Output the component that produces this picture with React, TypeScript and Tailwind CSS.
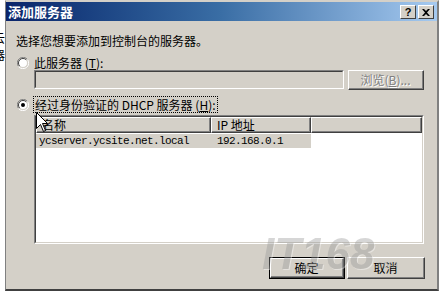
import React from 'react';

const cjk = { fontFamily: '"Noto Sans CJK SC", "Liberation Sans", sans-serif' };
const mono = { fontFamily: '"Liberation Mono", "Noto Sans CJK SC", monospace' };

function Radio({ checked }: { checked?: boolean }) {
  return (
    <svg width="12" height="12" viewBox="0 0 12 12" className="shrink-0">
      <path d="M10.5 2.5 A5.5 5.5 0 0 0 1.5 9.5" fill="none" stroke="#808080" strokeWidth="1" />
      <path d="M1.5 9.5 A5.5 5.5 0 0 0 10.5 2.5" fill="none" stroke="#ffffff" strokeWidth="1" />
      <circle cx="6" cy="6" r="4.5" fill="#ffffff" />
      <path d="M9.2 2.8 A4.5 4.5 0 0 0 2.8 9.2" fill="none" stroke="#404040" strokeWidth="1" />
      <path d="M2.8 9.2 A4.5 4.5 0 0 0 9.2 2.8" fill="none" stroke="#d4d0c8" strokeWidth="1" />
      {checked && <circle cx="6" cy="6" r="2" fill="#000000" />}
    </svg>
  );
}

function Button({ label, def, disabled, w }: { label: React.ReactNode; def?: boolean; disabled?: boolean; w: string }) {
  return (
    <div className={`${w} h-full ${def ? 'border border-black' : ''}`}>
      <div className="h-full border-t border-l border-t-white border-l-white border-r border-b border-r-[#404040] border-b-[#404040]">
        <div className="h-full flex items-center justify-center border-r border-b border-r-[#808080] border-b-[#808080] bg-[#d4d0c8]">
          <span
            className={`text-[12px] leading-[14px] ${disabled ? 'text-[#808080] [text-shadow:1px_1px_0_#ffffff]' : 'text-black'}`}
            style={cjk}
          >
            {label}
          </span>
        </div>
      </div>
    </div>
  );
}

function HeaderCell({ label, w }: { label: string; w: string }) {
  return (
    <div className={`${w} h-full border-t border-l border-t-white border-l-white border-r border-b border-r-[#404040] border-b-[#404040]`}>
      <div className="h-full border-r border-b border-r-[#808080] border-b-[#808080] bg-[#d4d0c8] pl-[5px] flex items-center">
        <span className="text-[12px] leading-[14px] text-black whitespace-pre" style={cjk}>{label}</span>
      </div>
    </div>
  );
}

export default function App() {
  return (
    <div className="relative flex w-[439px] h-[291px] bg-[#d4d0c8] overflow-hidden">
      {/* bit of window behind */}
      <div className="w-[5px] h-full bg-white flex flex-col items-end overflow-hidden pt-[31px] gap-[4px]">
        <span className="text-[12px] leading-[13px] text-black whitespace-nowrap" style={cjk}>云</span>
        <span className="text-[12px] leading-[13px] text-black whitespace-nowrap" style={cjk}>器</span>
      </div>

      {/* dialog */}
      <div className="flex-1 flex flex-col border-l border-t-2 border-l-[#808080] border-t-[#d4d0c8] border-r-2 border-r-[#808080] border-b-2 border-b-[#404040]">
        <div className="h-[19px] flex items-center justify-between pl-[2px] pr-[3px] bg-gradient-to-r from-[#0a246a] via-[#3a6ea5] to-[#a6caf0]">
          <span className="text-[13px] leading-[15px] font-bold text-white" style={cjk}>添加服务器</span>
          <div className="flex gap-[2px] mt-[1px]">
            <div className="w-[16px] h-[14px] bg-[#d4d0c8] border-t border-l border-white border-r border-b border-r-[#404040] border-b-[#404040] flex items-center justify-center">
              <span className="text-[11px] leading-[11px] font-bold text-black" style={{ fontFamily: '"Liberation Sans", sans-serif' }}>?</span>
            </div>
            <div className="w-[16px] h-[14px] bg-[#d4d0c8] border-t border-l border-white border-r border-b border-r-[#404040] border-b-[#404040] flex items-center justify-center">
              <svg width="8" height="7" viewBox="0 0 8 7">
                <path d="M0 0 L2 0 L4 2 L6 0 L8 0 L5 3.5 L8 7 L6 7 L4 5 L2 7 L0 7 L3 3.5 Z" fill="#000" />
              </svg>
            </div>
          </div>
        </div>

        <div className="flex-1 flex flex-col pl-[10px] pr-[12px]">
          <div className="mt-[13px] h-[14px] text-[12px] leading-[14px] text-black" style={cjk}>
            选择您想要添加到控制台的服务器。
          </div>

          <div className="mt-[8px] h-[13px] flex items-center">
            <div className="ml-[1px]"><Radio /></div>
            <span className="ml-[5px] text-[12px] leading-[14px] text-black" style={cjk}>
              此服务器 (<span className="underline">T</span>):
            </span>
          </div>

          <div className="mt-[1px] h-[20px] flex">
            <div className="ml-[18px] w-[310px] h-[19px] border-t border-l border-t-[#808080] border-l-[#808080] border-r border-b border-r-white border-b-white">
              <div className="h-full border-t border-l border-t-[#404040] border-l-[#404040] border-r border-b border-r-[#d4d0c8] border-b-[#d4d0c8] bg-[#d4d0c8]" />
            </div>
            <div className="ml-[4px] h-[20px]">
              <Button w="w-[76px]" disabled label={<>浏览(<span className="underline">B</span>)...</>} />
            </div>
          </div>

          <div className="mt-[6px] h-[17px] flex items-center">
            <div className="ml-[1px]"><Radio checked /></div>
            <span className="ml-[4px] h-[17px] px-[1px] flex items-center border border-dotted border-black text-[12px] leading-[14px] text-black" style={cjk}>
              经过身份验证的 DHCP 服务器 (<span className="underline">H</span>):
            </span>
          </div>

          <div className="mt-[2px] ml-[18px] w-[390px] h-[129px] border-t border-l border-t-[#808080] border-l-[#808080] border-r border-b border-r-white border-b-white">
            <div className="h-full flex flex-col border-t border-l border-t-[#404040] border-l-[#404040] border-r border-b border-r-[#d4d0c8] border-b-[#d4d0c8] bg-white">
              <div className="h-[16px] flex shrink-0">
                <HeaderCell w="w-[175px]" label="名称" />
                <HeaderCell w="w-[100px]" label="IP 地址" />
                <HeaderCell w="flex-1" label="" />
              </div>
              <div className="mt-[1px] w-[275px] h-[14px] flex bg-[#d4d0c8]">
                <span className="w-[175px] pl-[3px] text-[11px] leading-[14px] text-black tracking-[-0.6px]" style={mono}>
                  ycserver.ycsite.net.local
                </span>
                <span className="pl-[6px] text-[11px] leading-[14px] text-black tracking-[-0.6px]" style={mono}>
                  192.168.0.1
                </span>
              </div>
            </div>
          </div>

          <div className="mt-[13px] h-[22px] flex justify-end gap-[2px]">
            <Button w="w-[76px]" def label="确定" />
            <Button w="w-[78px]" label="取消" />
          </div>
        </div>
      </div>

      {/* mouse cursor */}
      <svg className="absolute left-[36px] top-[112px]" width="13" height="21" viewBox="0 0 13 21">
        <path d="M0.5 0.5 L0.5 16.5 L4.5 12.5 L7.5 19.5 L9.5 18.5 L6.5 11.5 L11.5 11.5 Z" fill="#ffffff" stroke="#000000" strokeWidth="1" />
      </svg>

      {/* watermark */}
      <div className="absolute left-[262px] top-[232px] flex items-end opacity-40 pointer-events-none">
        <span className="text-[44px] leading-[44px] font-black italic text-[#9a9a9a] [text-shadow:1px_1px_0_#ffffff]" style={{ fontFamily: '"Liberation Sans", sans-serif' }}>
          IT168
        </span>
        <span className="mb-[6px] text-[10px] leading-[10px] font-bold text-[#9a9a9a]" style={{ fontFamily: '"Liberation Sans", sans-serif' }}>
          .com
        </span>
      </div>
    </div>
  );
}
